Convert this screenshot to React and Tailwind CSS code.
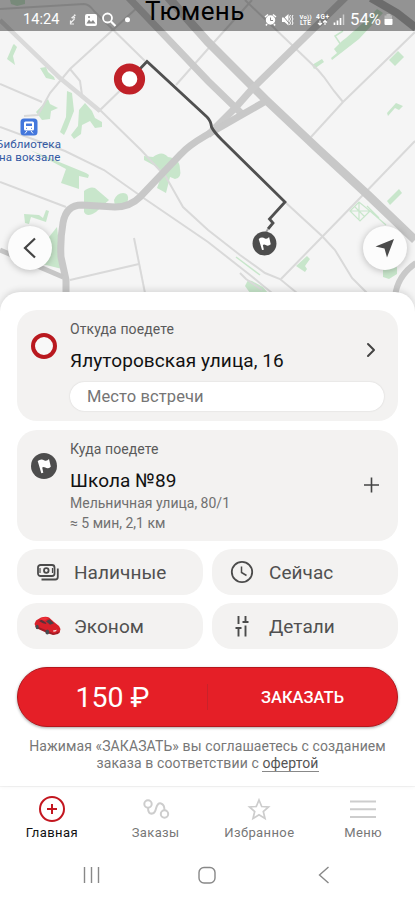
import { ChevronRight } from "lucide-react"

const minorRoads = [
  "M0 9 L84 4 Q89 4 94 11 L145 61",
  "M139 6 L70 69 L50 93 L38 115 L24 116",
  "M70 69 L80 81 L82 95 L99 111 L131 80",
  "M0 84 L42 102",
  "M0 127 L65 151 L104 170 L145 199 L208 242 L250 275 L272 293",
  "M100 110 L141 150 L166 177 L183 207 L208 230 L240 255 L265 273 L280 279 L297 293",
  "M0 182 L66 207",
  "M70 280 L139 264",
  "M134 238 L145 293",
  "M252 0 L207 50 L176 85",
  "M245 0 L318 70 L324 77 L334 91 L343 102",
  "M415 32 L343 102 L311 137",
  "M415 141 L360 198 L322 237 L281 279",
  "M285 202 L322 236 L335 250 L352 278 L367 293",
  "M240 273 L246 279 L262 290",
]

const mainRoads = [
  { d: "M0 20 L60 78 L100 111", w: 4.5, c: "#dadada" },
  { d: "M127 -4 L208 81 L242 114", w: 7, c: "#cacaca" },
  { d: "M167 -4 L208 42 L265 99 L318 149 L368 195 L415 240", w: 8.5, c: "#c8c8c8" },
  { d: "M346 -3 L253 88 L236 107 L208 135", w: 7, c: "#cacaca" },
  { d: "M266 101 L238 117 L205 136 Q188 146 181 154 L140 197 Q130 207 115 207 L82 205 Q66 205 63 223 Q60 240 61 257 L66 280 L66 310", w: 7, c: "#c8c8c8" },
  { d: "M0 250 L63 277", w: 5, c: "#c6c6c6" },
  { d: "M371 -2 L397 13 L416 28", w: 8, c: "#b5b5b5" },
  { d: "M416 263 Q397 276 395 297", w: 6, c: "#c9c9c9" },
]

const parks = [
  "M10 0h15v4l-8 2-6-2z",
  "M14 44l3 3-4 9 2 9-8-6 6-14z",
  "M40 68l6-1 2 5 6 5 1 3-9-2z",
  "M36 112l12-13 2 5 8 4-7 3-1 8-8 1z",
  "M67 91l5 2 2 18-7 18-3 6-4-3 6-15z",
  "M85 103l7 8 3 7 7 4v5l-7 1-5-7-8 4-1 9-7 5-3-4 7-9 1-16z",
  "M30 150l56 23 3 2-1 3-9-2 0 13-18-6 5-14z",
  "M84 191q6-5 11-3l14 12-13 12q-9 6-12 0z",
  "M114 200q3-7 9-7t5 7l-3 7h-10z",
  "M153 157q9-7 15 0 12 1 12 12 2 9-5 10l-5-2-4 16-9-5 5-14-5-7-13-7v-4z",
  "M24 214l15 1 4 3 3-8 3 1-3 11-15-5-2 7-4-1z",
  "M49 237l8-10 5 42-20-5z",
  "M312 65l10-6 2 3-10 7z",
  "M346 38l17-15 14-14 6 4-24 26-27 21-1-2 6-5-3-4 8-8z",
  "M387 113l9-10 7 3-4 4-4-2-7 8z",
  "M389 60l9-9 6 6-9 9z",
  "M387 201l12-12 3 4-12 12z",
  "M296 266l11-10 3 3-5 7 2 3-2 3z",
  "M383 270l14-3v7l-8 5-6-2z",
  "M252 281l-4-1-3 6 5 7h18l-5-6z",
]

function Flag({ x, y, scale }) {
  return (
    <g transform={`translate(${x} ${y}) scale(${scale})`}>
      <circle r="13" fill="#4d4d4d" />
      <path d="M-6.300 -5 Q-3 -7.800 0.500 -5.500 Q3 -4.500 5 -7 L6.800 0.800 Q4 3.400 1.300 1.600 Q-0.400 0.700 -1.800 1.500 L-0.700 6.700 L-2.700 7.200 Z" fill="#fff" />
    </g>
  )
}

function CityMap() {
  return (
    <svg width="415" height="312" viewBox="0 0 415 312" fill="none">
      <rect width="415" height="312" fill="#f5f5f5" />
      {parks.map(d => <path key={d} d={d} fill="#c8e6cb" />)}
      <path d="M341 45l-6-9 8-5" stroke="#c8e6cb" strokeWidth="1.500" />
      <path d="M350 211l9-9 11 9-10 10zM350 211h20M359 202v18M355 207l10 10M370 211l16 14M367 206l12 12" stroke="#c8e6cb" strokeWidth="1.200" />
      <path d="M236 257l24 18" stroke="#c8e6cb" strokeWidth="1.500" />
      {minorRoads.map(d => <path key={d} d={d} stroke="#d9d9d9" strokeWidth="2" />)}
      {mainRoads.map(({ d, w, c }) => <path key={d} d={d} stroke={c} strokeWidth={w} />)}
      <path d="M136 73 L147 61.500 L207 117 Q211 121 211.500 127 Q214 132 222 140 L285 202 L269.500 219 L273 223 L268 229" stroke="#505050" strokeWidth="2.800" />
      <path d="M268 229l-3 5" stroke="#aaa" strokeWidth="2" />
      <circle cx="129.500" cy="79" r="11.700" fill="#fff" stroke="#c02128" strokeWidth="7.800" />
      <Flag x={264.5} y={243.5} scale={0.92} />
      <rect x="20.500" y="118.500" width="17" height="17" rx="3.500" fill="#4377dc" />
      <path d="M25.500 121.500h7q1.500 0 1.500 1.500v6q0 1.500-1.500 1.500h-7q-1.500 0-1.500-1.500v-6q0-1.500 1.500-1.500z" fill="#fff" />
      <path d="M26 123.500h6v2.500h-6z" fill="#4377dc" />
      <path d="M26 128.300h1M31 128.300h1" stroke="#4377dc" />
      <path d="M27 131l-2 2.500M31 131l2 2.500" stroke="#fff" />
    </svg>
  )
}

function StatusBar() {
  return (
    <div className="absolute inset-x-0 top-0 flex h-[31px] items-center bg-black/40 pt-[9px] pl-[23px] text-white">
      <span className="w-[38px] text-[14.5px] leading-none tracking-[0.1px]">14:24</span>
      <svg width="354" height="20" viewBox="61 10 354 20" fill="none">
        <path d="M74.500 14.500v3.500h-3M71.500 18l4-3M74.500 19l-4 4M70.500 20.500v3.500h3.500" stroke="#eee" strokeWidth="1.200" />
        <rect x="85" y="14" width="12" height="12" rx="2" fill="#fff" />
        <path d="M86.500 23.500l2.500-4 2 2.500 2-2 2.500 3.500z" fill="#888" />
        <circle cx="89" cy="17" r="1" fill="#888" />
        <circle cx="107.500" cy="18" r="4.500" stroke="#fff" strokeWidth="1.800" />
        <path d="M111 21.500l4.500 4.500" stroke="#fff" strokeWidth="2.200" />
        <circle cx="127.500" cy="19.800" r="2.500" fill="#fff" />
        <circle cx="270.500" cy="20" r="4" fill="#fff" stroke="#fff" strokeWidth="1.500" />
        <path d="M265 17l3-2.500M276 17l-3-2.500M267 24l-1 1.500M274 24l1 1.500" stroke="#fff" strokeWidth="1.500" />
        <path d="M270.500 17.500v3h2.500" stroke="#888" />
        <path d="M282 17.500h2.500l4-3.500v11.500l-4-3.500H282z" fill="#fff" />
        <path d="M281.500 14l9 11" stroke="#909090" />
        <path d="M290.500 15l-1 2 1 2-1 2 1 2-1 2M293 15l-1 2 1 2-1 2 1 2-1 2" stroke="#fff" />
        <text x="299.500" y="18.500" fill="#fff" fontSize="6" fontWeight="700" textLength="12">Vo))</text>
        <text x="300" y="25.300" fill="#fff" fontSize="6.500" fontWeight="700" textLength="11">LTE</text>
        <text x="316" y="18.500" fill="#fff" fontSize="6.500" fontWeight="700" textLength="13">4G+</text>
        <path d="M320 20.500v4.500M318 23l2 2 2-2M325 25v-4.500M323 22.500l2-2 2 2" stroke="#fff" strokeWidth="1.100" />
        <path d="M334.500 25v-2.500M337.500 25v-4.500M340.500 25v-7" stroke="#fff" strokeWidth="1.700" />
        <path d="M343.500 25V14.500" stroke="#ccc" strokeWidth="1.500" />
        <text x="350" y="25.300" fill="#fff" fontSize="16" textLength="31" lengthAdjust="spacingAndGlyphs">54%</text>
        <path d="M386.500 14h4v1.500h1.500v3.500h-7.500v-3.500h2z" fill="#b8b8b8" />
        <path d="M384.500 19h8v5q0 1-1 1h-6q-1 0-1-1z" fill="#fff" />
      </svg>
    </div>
  )
}

function RedCar() {
  return (
    <svg width="27" height="20" viewBox="0 0 27 20">
      <path d="M0.500 8 L2 4.500 L7 1.500 Q12 0 15 1.500 L20 6 L25 10 L26.500 13 L25.500 17 L20 18.500 L15 17 L2 11 Z" fill="#d8202a" />
      <path d="M1 9.500 L14 15 L20 17.500 L26 15 L24 18 L19 19 L13 17 L2 12 Z" fill="#a01c25" />
      <path d="M5 5 L7.500 3.800 L11.500 6.300 L12.500 8 L9 7.300 Z" fill="#5b3038" />
      <path d="M12 5.300 L15.500 3.300 L20 7.300 L16 8.800 Z" fill="#4a4348" />
      <path d="M5.500 3.300 L8 1.700 Q12 .7 14.500 2 L11 4.500 Z" fill="#ec3038" />
      <ellipse cx="3.200" cy="11" rx="1.500" ry="2.200" fill="#474b50" />
      <ellipse cx="13.300" cy="16" rx="1.900" ry="2.500" fill="#474b50" />
      <path d="M19 14.500l4-0.800-1.500 1.800-2 .2z" fill="#f4d9dc" />
    </svg>
  )
}

function CashIcon() {
  return (
    <svg className="ml-[2px]" width="22" height="17" viewBox="0 0 22 17" fill="none" stroke="#4b4b4b" strokeWidth="1.800">
      <rect x="1" y="1" width="16.500" height="11" rx="2.500" />
      <circle cx="9.300" cy="6.500" r="2.300" />
      <path d="M3 4v5M15.500 4v5" strokeWidth="1.200" />
      <path d="M20.800 4.500V13q0 2.500-2.500 2.500H4.500" />
    </svg>
  )
}

function ClockIcon() {
  return (
    <svg width="24" height="24" viewBox="0 0 24 24" fill="none" stroke="#4b4b4b">
      <circle cx="12" cy="12" r="10.200" strokeWidth="1.800" />
      <path d="M11.500 6.500V12.500L16.500 15.500" strokeWidth="1.500" />
    </svg>
  )
}

function TuneIcon() {
  return (
    <svg width="14" height="21" viewBox="0 0 14 21" fill="none" stroke="#4b4b4b" strokeWidth="1.900">
      <path d="M3.500 0v8M0.500 12h6M3.500 12v8.500M10.500 0v6M7.500 6h6M10.500 9.500v11" />
    </svg>
  )
}

function Option({ icon, label }) {
  return (
    <div className="flex h-[46px] items-center rounded-[20px] bg-[#f3f2f1]">
      <div className="flex w-[57px] justify-center pl-[3px]">{icon}</div>
      <span className="pt-[2px] text-[19px] tracking-[0.05px] text-[#505050]">{label}</span>
    </div>
  )
}

function Tab({ icon, label, className }) {
  return (
    <div className="flex flex-1 flex-col items-center">
      <div className="flex h-[28px] items-center">{icon}</div>
      <span className={`mt-px text-[13px] leading-[18px] tracking-[0.4px] ${className}`}>{label}</span>
    </div>
  )
}

export default function App() {
  return (
    <div className="flex h-[900px] w-[415px] flex-col overflow-hidden bg-white font-['Roboto',sans-serif]">
      <div className="relative h-[312px] shrink-0">
        <CityMap />
        <span className="absolute top-0 left-[145px] text-[26px] leading-[22px] tracking-[0.35px] text-black">Тюмень</span>
        <div className="absolute top-[138px] left-[-4px] text-[11.5px] leading-[13px] tracking-[0.15px] whitespace-nowrap text-[#3359a3]">
          <p>Библиотека</p>
          <p className="pl-[3px]">на вокзале</p>
        </div>
        <StatusBar />
        <button className="absolute top-[226px] left-[8px] flex size-[44px] items-center justify-center rounded-full bg-[#fcfcfc] shadow-[0_1px_7px_rgba(0,0,0,0.25)]">
          <svg width="14" height="22" viewBox="0 0 14 22" fill="none" stroke="#444" strokeWidth="2.200">
            <path d="M12 1.500L2 11L12 20.500" />
          </svg>
        </button>
        <button className="absolute top-[226px] left-[363px] flex size-[44px] items-center justify-center rounded-full bg-[#fcfcfc] shadow-[0_1px_7px_rgba(0,0,0,0.25)]">
          <svg width="20" height="20" viewBox="0 0 20 20" fill="#4b4b4b">
            <path d="M19 1L0.500 8.500L9.500 10.500L12 19.500Z" />
          </svg>
        </button>
      </div>

      <div className="relative -mt-5 flex flex-1 flex-col rounded-t-[20px] bg-white px-[17px] pt-[18px] shadow-[0_-2px_6px_rgba(0,0,0,0.12)]">
        <div className="flex h-[111px] shrink-0 rounded-[20px] bg-[#f3f2f1]">
          <div className="w-[53px] pt-[22px] pl-[12.500px]">
            <svg width="28" height="28" viewBox="0 0 28 28">
              <circle cx="14" cy="14" r="11" fill="#f8f8f8" stroke="#b9191f" strokeWidth="4" />
            </svg>
          </div>
          <div className="flex flex-1 flex-col pr-[14px]">
            <div className="flex justify-between">
              <div>
                <p className="mt-[10px] text-[14px] leading-[18px] tracking-[0.1px] text-[#5a5a5a]">Откуда поедете</p>
                <p className="mt-[11px] text-[19px] leading-[24px] tracking-[0.1px] text-[#111]">Ялуторовская улица, 16</p>
              </div>
              <ChevronRight className="mt-[28px] mr-px size-[24px] text-[#444]" strokeWidth={2} />
            </div>
            <div className="mt-[9px] flex h-[29px] items-center rounded-full bg-white pt-[2px] pl-[17px] text-[16.5px] tracking-[0.1px] text-[#757575] shadow-[0_0_2px_rgba(0,0,0,0.14)]">
              Место встречи
            </div>
          </div>
        </div>

        <div className="mt-[9px] flex h-[111px] shrink-0 rounded-[20px] bg-[#f3f2f1]">
          <div className="w-[53px] pt-[22px] pl-[12.500px]">
            <svg width="28" height="28" viewBox="0 0 28 28">
              <Flag x={14} y={14} scale={1} />
            </svg>
          </div>
          <div className="flex-1">
            <p className="mt-[10px] text-[14px] leading-[18px] tracking-[0.1px] text-[#5a5a5a]">Куда поедете</p>
            <p className="mt-[11px] text-[19px] leading-[24px] tracking-[0.1px] text-[#111]">Школа №89</p>
            <p className="text-[14px] leading-[20px] text-[#707070]">Мельничная улица, 80/1</p>
            <p className="text-[14px] leading-[20px] text-[#707070]">≈ 5 мин, 2,1 км</p>
          </div>
          <svg className="mt-[47px] mr-[19px]" width="15" height="16" viewBox="0 0 15 16" stroke="#444" strokeWidth="1.600">
            <path d="M7.500 0.500v15M0 8h15" />
          </svg>
        </div>

        <div className="mt-[8px] grid grid-cols-2 gap-x-[9px] gap-y-[8px]">
          <Option icon={<CashIcon />} label="Наличные" />
          <Option icon={<ClockIcon />} label="Сейчас" />
          <Option icon={<RedCar />} label="Эконом" />
          <Option icon={<TuneIcon />} label="Детали" />
        </div>

        <button className="mt-[18px] flex h-[60px] shrink-0 items-center rounded-full border border-[#b5161c] bg-[#e51f27] text-white shadow-[0_1px_3px_rgba(0,0,0,0.35)]">
          <span className="flex-1 pt-[2px] text-[28.500px] font-normal">150 ₽</span>
          <span className="h-[26px] w-px bg-[#c9222a]" />
          <span className="flex-1 pt-[2px] text-[16.5px] font-medium">ЗАКАЗАТЬ</span>
        </button>

        <p className="mt-[11px] text-center text-[14px] leading-[17px] tracking-[0.1px] whitespace-nowrap text-[#777]">
          Нажимая «ЗАКАЗАТЬ» вы соглашаетесь с созданием
          <br />
          заказа в соответствии с <span className="border-b border-[#888] text-[#555]">офертой</span>
        </p>
      </div>

      <nav className="-mt-px flex h-[65px] shrink-0 border-t-2 border-[#f5f5f5] pt-[8px]">
        <Tab
          label="Главная"
          className="text-[#111]"
          icon={
            <svg width="28" height="28" viewBox="0 0 28 28" fill="none" stroke="#c3161f" strokeWidth="2">
              <circle cx="14" cy="14" r="12" />
              <path d="M14 9v10M9 14h10" />
            </svg>
          }
        />
        <Tab
          label="Заказы"
          className="text-[#777]"
          icon={
            <svg width="28" height="22" viewBox="0 0 28 22" fill="none" stroke="#cdcdcd" strokeWidth="2">
              <circle cx="6" cy="6" r="3.700" />
              <circle cx="22.500" cy="16" r="3.700" />
              <path d="M6 9.700Q6 16.500 10.500 15.500Q13 15 14 10.500Q15.500 4.500 19 5.500Q22.500 6.500 22.500 12.300" />
            </svg>
          }
        />
        <Tab
          label="Избранное"
          className="text-[#777]"
          icon={
            <svg width="24" height="24" viewBox="0 0 24 24" fill="none" stroke="#cdcdcd" strokeWidth="1.700">
              <path d="M12 3L14.700 9.500L21.500 10L16.300 14.500L18 21.500L12 17.800L6 21.500L7.700 14.500L2.500 10L9.300 9.500Z" />
            </svg>
          }
        />
        <Tab
          label="Меню"
          className="text-[#777]"
          icon={
            <svg width="26" height="18" viewBox="0 0 26 18" stroke="#cdcdcd" strokeWidth="2">
              <path d="M0 1.500h26M0 9.200h26M0 17h26" />
            </svg>
          }
        />
      </nav>

      <div className="flex h-[50px] shrink-0 justify-between pt-[16px] pr-[85px] pl-[83px]">
        <svg width="17" height="18" viewBox="0 0 17 18" stroke="#888" strokeWidth="1.400">
          <path d="M1.500 1v16M8.500 1v16M15.500 1v16" />
        </svg>
        <svg className="-ml-[4px]" width="18" height="18" viewBox="0 0 18 18" fill="none" stroke="#888" strokeWidth="1.400">
          <rect x="1" y="1.500" width="16" height="15.500" rx="5" />
        </svg>
        <svg width="12" height="18" viewBox="0 0 12 18" fill="none" stroke="#888" strokeWidth="1.400">
          <path d="M10.500 1L1.500 9L10.500 17" />
        </svg>
      </div>
    </div>
  )
}
